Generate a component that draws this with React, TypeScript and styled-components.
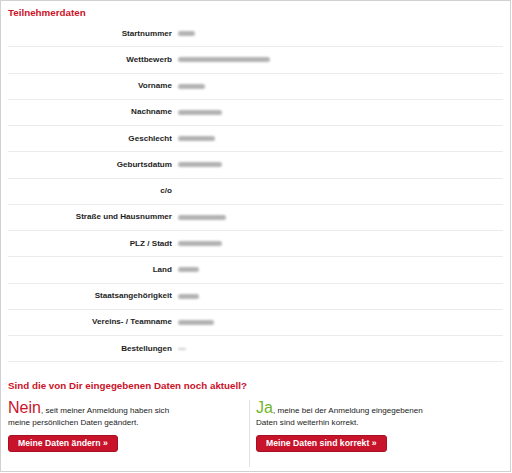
import React from 'react'
import styled, { createGlobalStyle } from 'styled-components'

const GlobalStyle = createGlobalStyle`
  html, body {
    margin: 0;
    padding: 0;
    background: #ffffff;
  }
  body {
    font-family: "Liberation Sans", Arial, sans-serif;
    color: #222222;
  }
`

const RED = '#cc1229'
const GREEN = '#72b52b'

const Frame = styled.div`
  box-sizing: border-box;
  width: 511px;
  height: 472px;
  border: 1px solid #d2d2d2;
  padding: 6px 6px 0 7px;
`

const Title = styled.h2`
  margin: 0 0 2px;
  font-size: 9.8px;
  line-height: 12px;
  font-weight: bold;
  color: ${RED};
`

const List = styled.div`
  display: flex;
  flex-direction: column;
`

const Row = styled.div`
  box-sizing: border-box;
  height: 26.25px;
  display: grid;
  grid-template-columns: 164px 1fr;
  column-gap: 6px;
  align-items: center;
  border-bottom: 1px solid #ebebeb;
  margin-right: 1px;
`

const Label = styled.span`
  text-align: right;
  font-size: 8.1px;
  line-height: 10px;
  font-weight: bold;
  color: #1e1e1e;
`

// blurred personal data, drawn as smudges like in the original
const Redacted = styled.span<{ $w: number; $light?: boolean }>`
  display: block;
  width: ${(p) => p.$w}px;
  height: ${(p) => (p.$light ? 2 : 5)}px;
  border-radius: 3px;
  background: ${(p) => (p.$light ? '#cfcfcf' : '#b3b3b3')};
  filter: blur(1px);
`

const Question = styled.h3`
  margin: 18px 0 8px;
  font-size: 9.8px;
  line-height: 12px;
  font-weight: bold;
  color: ${RED};
`

const Choices = styled.div`
  display: grid;
  grid-template-columns: 241px 1fr;
`

const Choice = styled.div<{ $divider?: boolean }>`
  padding: 0 0 15px ${(p) => (p.$divider ? '6px' : '0')};
  border-left: ${(p) => (p.$divider ? '1px solid #e2e2e2' : 'none')};
`

const Text = styled.p`
  margin: 0;
  font-size: 8.1px;
  line-height: 12px;
  color: #222222;
`

const Big = styled.span<{ $color: string }>`
  font-size: 16px;
  line-height: 16px;
  color: ${(p) => p.$color};
`

const ActionButton = styled.button`
  display: inline-block;
  margin-top: 6px;
  height: 17px;
  padding: 0 9px;
  border: 1px solid #a90f22;
  border-radius: 3px;
  background: #c8142b;
  color: #ffffff;
  font-family: "Liberation Sans", Arial, sans-serif;
  font-size: 8.7px;
  font-weight: bold;
  line-height: 15px;
  cursor: pointer;
`

const fields: { label: string; w: number; light?: boolean }[] = [
  { label: 'Startnummer', w: 17 },
  { label: 'Wettbewerb', w: 92 },
  { label: 'Vorname', w: 27 },
  { label: 'Nachname', w: 44 },
  { label: 'Geschlecht', w: 37 },
  { label: 'Geburtsdatum', w: 44 },
  { label: 'c/o', w: 0 },
  { label: 'Straße und Hausnummer', w: 48 },
  { label: 'PLZ / Stadt', w: 44 },
  { label: 'Land', w: 21 },
  { label: 'Staatsangehörigkeit', w: 21 },
  { label: 'Vereins- / Teamname', w: 36 },
  { label: 'Bestellungen', w: 8, light: true },
]

export default function App(): React.ReactElement {
  return (
    <>
      <GlobalStyle />
      <Frame>
        <Title>Teilnehmerdaten</Title>
        <List>
          {fields.map((f) => (
            <Row key={f.label}>
              <Label>{f.label}</Label>
              {f.w > 0 ? <Redacted $w={f.w} $light={f.light} /> : <span />}
            </Row>
          ))}
        </List>
        <Question>Sind die von Dir eingegebenen Daten noch aktuell?</Question>
        <Choices>
          <Choice>
            <Text>
              <Big $color={RED}>Nein</Big>, seit meiner Anmeldung haben sich
              <br />
              meine persönlichen Daten geändert.
            </Text>
            <ActionButton>Meine Daten ändern »</ActionButton>
          </Choice>
          <Choice $divider>
            <Text>
              <Big $color={GREEN}>Ja</Big>, meine bei der Anmeldung eingegebenen
              <br />
              Daten sind weiterhin korrekt.
            </Text>
            <ActionButton>Meine Daten sind korrekt »</ActionButton>
          </Choice>
        </Choices>
      </Frame>
    </>
  )
}
